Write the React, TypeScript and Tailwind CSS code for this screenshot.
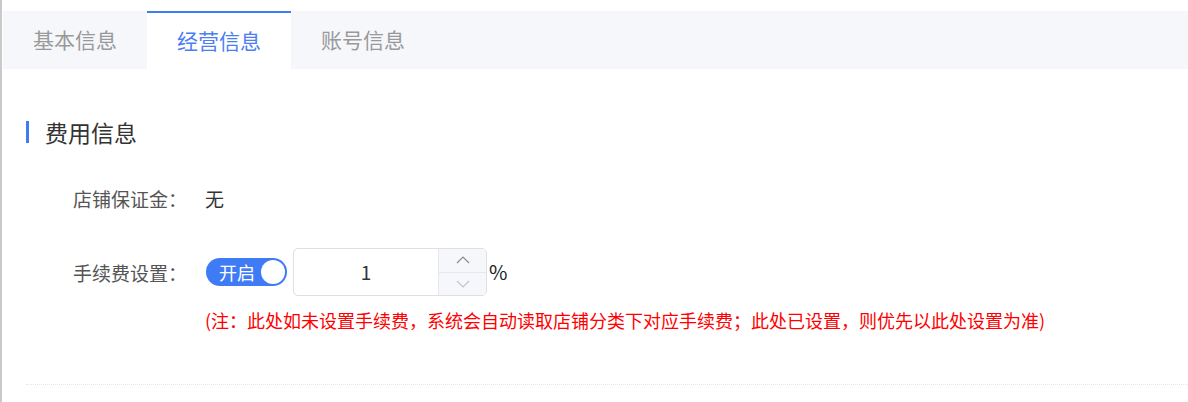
import React from "react";

export default function App() {
  const font = { fontFamily: '"Noto Sans CJK SC", "Noto Sans", sans-serif' };
  return (
    <div className="flex w-[1188px] h-[402px] bg-white overflow-hidden" style={font}>
      <div className="w-[2px] h-full bg-[#c9c9c9] shrink-0" />
      <div className="w-px shrink-0" />
      <div className="flex-1 flex flex-col">
        <div className="h-[11px]" />
        <div className="flex h-[58px] bg-[#f5f7fb]">
          <div className="w-[144px] flex items-center justify-center text-[21px] text-[#999999]">基本信息</div>
          <div className="w-[144px] flex items-center justify-center text-[21px] text-[#4a7ef2] bg-white border-t-2 border-[#3f7bf5]">经营信息</div>
          <div className="w-[144px] flex items-center justify-center text-[21px] text-[#999999]">账号信息</div>
        </div>
        <div className="flex items-center mt-[52px] ml-[23px] h-[22px]">
          <div className="w-[3px] h-[22px] bg-[#3f7bf5]" />
          <div className="ml-[16px] text-[23px] text-[#333333] leading-none">费用信息</div>
        </div>
        <div className="flex items-center mt-[42px] h-[26px]">
          <div className="w-[184px] text-right text-[19px] text-[#555555] leading-none">店铺保证金：</div>
          <div className="ml-[18px] text-[19px] text-[#333333] leading-none">无</div>
        </div>
        <div className="flex items-center mt-[37px]">
          <div className="w-[184px] text-right text-[19px] text-[#555555] leading-none">手续费设置：</div>
          <div className="ml-[19px] flex items-center">
            <div className="w-[81px] h-[28px] rounded-full bg-[#3f7bf5] flex items-center justify-between pl-[13px] pr-[2px]">
              <span className="text-[18px] text-white leading-none">开启</span>
              <span className="w-[24px] h-[24px] rounded-full bg-white" />
            </div>
            <div className="ml-[6px] w-[194px] h-[48px] border border-[#dcdfe6] rounded-[5px] flex overflow-hidden">
              <div className="flex-1 flex items-center justify-center text-[19px] text-[#333333]">1</div>
              <div className="w-[48px] flex flex-col bg-[#f5f7fa] border-l border-[#e4e7ed]">
                <div className="flex-1 flex items-center justify-center border-b border-[#e4e7ed]">
                  <svg width="14" height="8" viewBox="0 0 14 8" fill="none">
                    <path d="M1 7L7 1L13 7" stroke="#8a8d94" strokeWidth="1.2" />
                  </svg>
                </div>
                <div className="flex-1 flex items-center justify-center">
                  <svg width="14" height="8" viewBox="0 0 14 8" fill="none">
                    <path d="M1 1L7 7L13 1" stroke="#c0c4cc" strokeWidth="1.2" />
                  </svg>
                </div>
              </div>
            </div>
            <span className="ml-[2px] text-[20px] text-[#222222] leading-none">%</span>
          </div>
        </div>
        <div className="mt-[15px] ml-[202px] text-[18px] text-[#ff0000] leading-none">
          (注：此处如未设置手续费，系统会自动读取店铺分类下对应手续费；此处已设置，则优先以此处设置为准)
        </div>
        <div className="mt-[55px] ml-[23px] border-t border-dotted border-[#e6e6e6]" />
      </div>
    </div>
  );
}
